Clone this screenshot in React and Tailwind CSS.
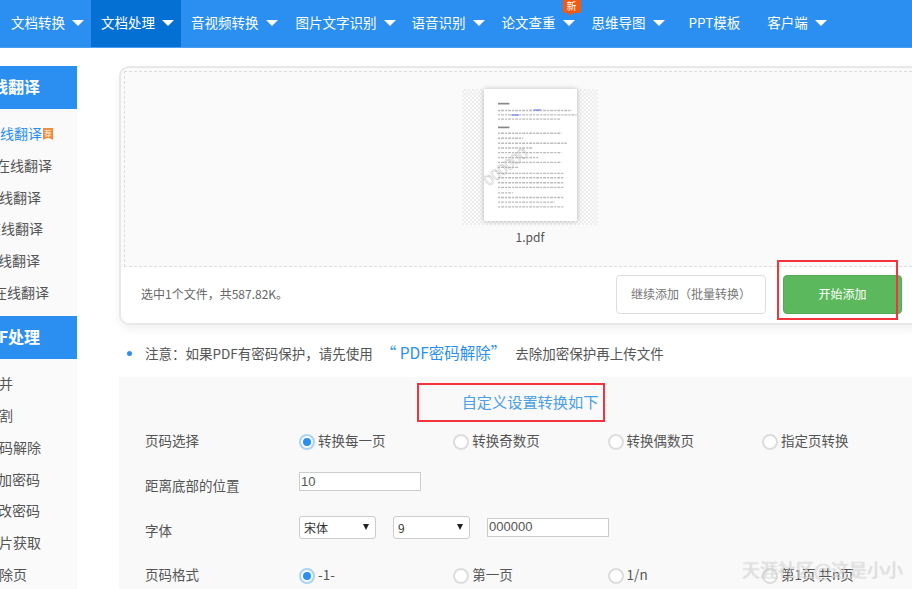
const NAV = [
  { label: "文档转换", pl: "pl-[11px]", pr: "pr-[7px]" },
  { label: "文档处理", pl: "pl-[10px]", pr: "pr-[7px]", active: true },
  { label: "音视频转换", pl: "pl-[10px]", pr: "pr-[8px]" },
  { label: "图片文字识别", pl: "pl-[10px]", pr: "pr-[6px]" },
  { label: "语音识别", pl: "pl-[10px]", pr: "pr-[7px]" },
  { label: "论文查重", pl: "pl-[10px]", pr: "pr-[7px]", badge: true },
  { label: "思维导图", pl: "pl-[10px]", pr: "pr-[6px]" },
  { label: "PPT模板", pl: "pl-[18px]", pr: "pr-[17px]", noArrow: true },
  { label: "客户端", pl: "pl-[10px]", pr: "pr-[7px]" },
];

const TRANSLATE = [
  { text: "线翻译", cls: "text-[#2a8ff0]", tag: true },
  { text: "在线翻译", cls: "-ml-[4px]" },
  { text: "线翻译", cls: "-ml-[1px]" },
  { text: "在线翻译", cls: "-ml-[13px]" },
  { text: "线翻译", cls: "-ml-[2px]" },
  { text: "在线翻译", cls: "-ml-[7px]" },
];

const PDF_TOOLS = [
  { text: "并", cls: "-ml-[1px]" },
  { text: "割", cls: "-ml-[1px]" },
  { text: "码解除", cls: "-ml-[1px]" },
  { text: "加密码", cls: "-ml-[2px]" },
  { text: "改密码", cls: "-ml-[2px]" },
  { text: "片获取", cls: "-ml-[1px]" },
  { text: "除页", cls: "-ml-[1px]" },
];

function Triangle() {
  return <span className="ml-[7px] w-0 h-0 border-x-[6px] border-t-[6px] border-x-transparent border-t-white" />;
}

function TopNav() {
  return (
    <nav className="flex h-[48px] bg-[#2a8ff0] border-b border-[#4a9ff2] text-white text-[13.5px]">
      {NAV.map((item) => (
        <div
          key={item.label}
          className={`relative flex items-center whitespace-nowrap pb-[2px] ${item.pl} ${item.pr} ${item.active ? "bg-[#0570d4]" : ""}`}
        >
          {item.label}
          {!item.noArrow && <Triangle />}
          {item.badge && (
            <span className="absolute top-0 right-[1px] w-[18px] h-[13px] bg-[#f4590f] rounded-b-[2px] text-[10px] leading-[12px] text-center">
              新
              <span className="absolute left-[6px] top-[13px] w-0 h-0 border-r-[5px] border-t-[3px] border-r-transparent border-t-[#f4590f]" />
            </span>
          )}
        </div>
      ))}
    </nav>
  );
}

function SideGroup({ title, items }) {
  return (
    <>
      <div className="h-[43px] bg-[#2a8ff0] flex items-center justify-end pr-[37px] pb-[3px] text-white text-[16px] font-bold whitespace-nowrap">
        {title}
      </div>
      <ul className="pt-[9px] pb-[8px] text-[14px] text-[#555]">
        {items.map((it, i) => (
          <li key={i} className={`flex items-center h-[31.7px] whitespace-nowrap ${it.cls}`}>
            {it.text}
            {it.tag && (
              <span className="ml-[1px] w-[10px] h-[12px] bg-[#f58a3c] text-white text-[7px] leading-[10px] text-center [clip-path:polygon(0_0,100%_0,100%_100%,50%_82%,0_100%)]">
                荐
              </span>
            )}
          </li>
        ))}
      </ul>
    </>
  );
}

function DocThumb() {
  const lines = [
    [42, 64, 220],
    [42, 77, 235],
    [42, 90, 185],
    [42, 132, 190],
    [42, 147, 75],
    [42, 162, 205],
    [42, 176, 105],
    [42, 190, 190],
    [42, 205, 120],
    [42, 219, 190],
    [42, 234, 60],
    [42, 252, 195],
    [42, 265, 195],
    [42, 280, 195],
    [42, 294, 195],
    [42, 310, 45],
    [42, 324, 195],
    [42, 338, 170],
    [42, 352, 195],
  ];
  return (
    <svg viewBox="0 0 278 394" className="w-[93px] h-[132px] block">
      <rect width="278" height="394" fill="#fff" />
      <rect x="42" y="41" width="34" height="5" fill="#555" opacity="0.7" />
      <rect x="42" y="112" width="34" height="5" fill="#555" opacity="0.7" />
      {lines.map(([x, y, w], i) => (
        <line key={i} x1={x} y1={y} x2={x + w} y2={y} stroke="#777" strokeWidth="4" strokeDasharray="6 3 9 3" opacity="0.5" />
      ))}
      <rect x="148" y="60" width="22" height="5" fill="#5a6cf0" opacity="0.6" />
      <rect x="82" y="75" width="22" height="5" fill="#5a6cf0" opacity="0.6" />
      <text x="14" y="292" transform="rotate(-38 14 292)" fontSize="46" fill="none" stroke="#aaa" strokeWidth="1" fontFamily="Liberation Sans, sans-serif">
        000000
      </text>
    </svg>
  );
}

function Radio({ checked, label }) {
  return (
    <label className="w-[154.3px] shrink-0 flex items-center gap-[3px] whitespace-nowrap">
      <span className={`mt-[3px] w-[16px] h-[16px] rounded-full bg-white border-2 flex items-center justify-center ${checked ? "border-[#a9d2f7]" : "border-[#ddd]"}`}>
        {checked && <span className="w-[8px] h-[8px] rounded-full bg-[#2a8ff0]" />}
      </span>
      {label}
    </label>
  );
}

function FormRow({ label, children }) {
  return (
    <div className="flex items-center h-[44.7px]">
      <div className="w-[154px] shrink-0">{label}</div>
      {children}
    </div>
  );
}

function Select({ value, className }) {
  return (
    <div className={`relative -mt-[4px] w-[77px] h-[23px] ${className}`}>
      <select defaultValue={value} className="appearance-none block w-full h-full pl-[4px] border border-[#ccc] rounded-[3px] bg-white text-[12px] text-[#333]">
        <option>{value}</option>
      </select>
      <span className="absolute right-[7px] top-[8px] w-0 h-0 border-x-[3.5px] border-t-[6px] border-x-transparent border-t-[#222]" />
    </div>
  );
}

export default function App() {
  return (
    <div
      className="relative h-[589px] w-[912px] overflow-hidden bg-white"
      style={{ fontFamily: '"Noto Sans CJK SC", "Liberation Sans", sans-serif' }}
    >
      <TopNav />

      <div className="flex pt-[18px]">
        {/* left column, cut by the window edge */}
        <aside className="w-[77px] shrink-0 overflow-hidden bg-[#fafafa] h-[523px]">
          <SideGroup title="线翻译" items={TRANSLATE} />
          <SideGroup title="F处理" items={PDF_TOOLS} />
        </aside>

        <main className="ml-[42px] flex-1 min-w-0">
          {/* upload card */}
          <div className="-mr-[10px] border-2 border-[#e8e8e8] rounded-[10px] bg-[#fafafa] shadow-[0_4px_8px_rgba(0,0,0,0.06)]">
            <div className="m-[3px] mb-0 h-[196px] border border-dashed border-[#ddd] border-r-0 flex flex-col items-center pt-[17px] pl-[18px]">
              <div className="w-[136px] h-[136px] flex justify-center bg-[repeating-conic-gradient(#eeeeee_0_25%,#fafafa_0_50%)] bg-[length:4px_4px]">
                <div className="h-[132px] shadow-[0_0_5px_rgba(0,0,0,0.25)]">
                  <DocThumb />
                </div>
              </div>
              <div className="mt-[3px] text-[12px] text-[#555]">1.pdf</div>
            </div>
            <div className="h-[56px] bg-white rounded-b-[8px] flex items-start pt-[8px] pl-[20px] pr-[18px]">
              <span className="mt-[10px] text-[12px] text-[#666]">选中1个文件，共587.82K。</span>
              <button className="ml-auto w-[150px] h-[39px] pb-[1px] border border-[#ddd] rounded-[4px] bg-white text-[12px] text-[#777]">
                继续添加（批量转换）
              </button>
              <div className="relative ml-[17px]">
                <button className="block w-[119px] h-[39px] pb-[1px] rounded-[4px] bg-[#5cb85c] border border-[#55a955] text-[12px] text-white">
                  开始添加
                </button>
                <div className="absolute -left-[6px] right-[4px] -top-[15px] -bottom-[6px] border-2 border-[#f4333c]" />
              </div>
            </div>
          </div>

          {/* password note */}
          <div className="h-[52px] pt-[4px] flex items-center text-[13.5px] text-[#555] whitespace-nowrap">
            <span className="ml-[8px] w-[5px] h-[5px] rounded-full bg-[#2a8ff0]" />
            <span className="ml-[13px]">注意：如果PDF有密码保护，请先使用</span>
            <span className="ml-[8px] text-[15.5px] text-[#2a8ff0]">“ PDF密码解除”</span>
            <span className="ml-[9px]">去除加密保护再上传文件</span>
          </div>

          {/* page number options */}
          <section className="bg-[#f9f9f9] h-[240px] pl-[26px] text-[13.5px] text-[#555]">
            <div className="h-[41px] flex justify-center pr-[26px] pt-[13px]">
              <div className="relative ml-[29px] h-[22px] text-[15.2px] leading-[22px] text-[#4a9fe6]">
                自定义设置转换如下
                <div className="absolute -left-[45px] -right-[7px] -top-[7px] -bottom-[10px] border-2 border-[#f4333c]" />
              </div>
            </div>
            <FormRow label="页码选择">
              <Radio checked label="转换每一页" />
              <Radio label="转换奇数页" />
              <Radio label="转换偶数页" />
              <Radio label="指定页转换" />
            </FormRow>
            <FormRow label="距离底部的位置">
              <input
                defaultValue="10"
                className="-mt-[7px] w-[122px] h-[19px] border border-[#ccc] bg-white text-[13px] px-[1px] outline-none"
                style={{ fontFamily: '"Liberation Sans", sans-serif' }}
              />
            </FormRow>
            <FormRow label="字体">
              <Select value="宋体" />
              <Select value="9" className="ml-[17px]" />
              <input
                defaultValue="000000"
                className="-mt-[5px] ml-[17px] w-[122px] h-[19px] border border-[#ccc] bg-white text-[13px] px-[1px] outline-none"
                style={{ fontFamily: '"Liberation Sans", sans-serif' }}
              />
            </FormRow>
            <FormRow label="页码格式">
              <Radio checked label="-1-" />
              <Radio label="第一页" />
              <Radio label="1/n" />
              <Radio label="第1页 共n页" />
            </FormRow>
          </section>
        </main>
      </div>

      {/* site watermark over the page */}
      <div className="absolute left-[742px] top-[556px] text-[18px] leading-[26px] text-white/60 whitespace-nowrap [text-shadow:0_0_1px_rgba(0,0,0,0.3)]">
        天涯社区@这是小小
      </div>
    </div>
  );
}
